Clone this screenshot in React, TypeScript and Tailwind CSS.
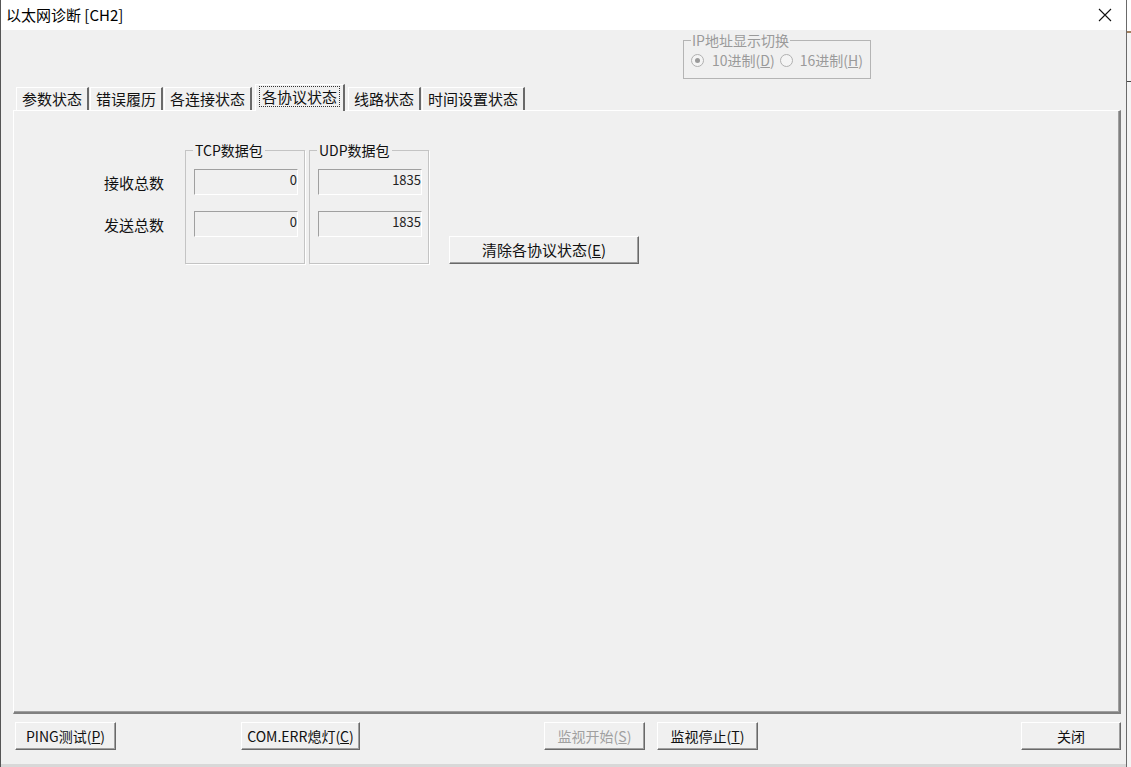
import React from 'react';

const font = { fontFamily: '"Noto Sans CJK SC", "Noto Sans", sans-serif' };

function Btn({ children, disabled, className }: { children: React.ReactNode; disabled?: boolean; className?: string }) {
  return (
    <div
      className={`flex items-center justify-center h-[28px] whitespace-nowrap border border-t-white border-l-white border-r-[#696969] border-b-[#696969] shadow-[inset_-1px_-1px_0_#a0a0a0] bg-[#f0f0f0] text-[14px] ${disabled ? 'text-[#a0a0a0]' : 'text-[#111]'} ${className ?? ''}`}
    >
      <span>{children}</span>
    </div>
  );
}

function Field({ value }: { value: string }) {
  return (
    <div className="h-[26px] border-t border-l border-t-[#a0a0a0] border-l-[#a0a0a0] border-b border-r border-b-white border-r-white bg-[#f0f0f0] text-[13px] text-right pr-0 leading-[20px] text-[#222]">
      {value}
    </div>
  );
}

function Group({ title, values }: { title: string; values: string[] }) {
  return (
    <div className="relative w-[120px] h-[114px] border border-[#c4c4c4] shadow-[1px_1px_0_white] pt-[18px] pl-[8px] pr-[6px]">
      <span className="absolute -top-[10px] left-[7px] bg-[#f0f0f0] px-[2px] text-[14px] leading-[18px] text-[#111]">{title}</span>
      <div className="flex flex-col gap-[16px]">
        {values.map((v, i) => (
          <Field key={i} value={v} />
        ))}
      </div>
    </div>
  );
}

const tabs = ['参数状态', '错误履历', '各连接状态', '各协议状态', '线路状态', '时间设置状态'];

export default function App() {
  return (
    <div className="w-[1131px] h-[767px] flex bg-white overflow-hidden" style={font}>
      <div className="w-[1127px] h-full flex flex-col border-l border-l-[#555] border-r border-r-[#6a6a6a]">
        {/* title bar */}
        <div className="h-[30px] bg-white flex items-center justify-between pl-[5px] pr-[14px]">
          <span className="text-[15px] text-black">以太网诊断 [CH2]</span>
          <svg width="14" height="14" viewBox="0 0 14 14">
            <path d="M1 1 L13 13 M13 1 L1 13" stroke="#111" strokeWidth="1.1" />
          </svg>
        </div>

        {/* body */}
        <div className="flex-1 bg-[#f0f0f0] flex flex-col border-b-[3px] border-b-[#d8d8d8]">
          <div className="h-[54px] pt-[10px] pl-[682px]">
            <div className="relative w-[188px] h-[39px] border border-[#b4b4b4] text-[#9a9a9a]">
              <span className="absolute -top-[9px] left-[7px] bg-[#f0f0f0] px-[1px] text-[14px] leading-[16px]">IP地址显示切换</span>
              <div className="flex items-center pl-[7px] pt-[10px] text-[14px] leading-[18px] whitespace-nowrap">
                <span className="w-[13px] h-[13px] rounded-full border border-[#b0b0b0] flex items-center justify-center bg-[#f4f4f4]">
                  <span className="w-[5px] h-[5px] rounded-full bg-[#9a9a9a]" />
                </span>
                <span className="ml-[8px]">
                  10进制(<u>D</u>)
                </span>
                <span className="ml-[5px] w-[13px] h-[13px] rounded-full border border-[#b0b0b0] bg-[#f4f4f4]" />
                <span className="ml-[7px]">
                  16进制(<u>H</u>)
                </span>
              </div>
            </div>
          </div>

          {/* tabs */}
          <div className="flex items-end gap-[1px] pl-[15px] h-[26px]">
            {tabs.map((t, i) =>
              i === 3 ? (
                <div key={t} className="relative -mb-[1px] z-10 h-[27px] px-[3px] mx-[2px] border-t border-l border-t-white border-l-white border-r-2 border-r-[#696969] bg-[#f0f0f0] flex items-start pt-[1px]">
                  <span className="border border-dotted border-[#333] px-[2px] text-[15px] leading-[19px] text-[#111]">{t}</span>
                </div>
              ) : (
                <div key={t} className="h-[23px] px-[5px] border-t border-l border-t-white border-l-white border-r-2 border-r-[#696969] flex items-center text-[15px] leading-[20px] text-[#111]">
                  {t}
                </div>
              )
            )}
          </div>

          {/* tab panel */}
          <div className="ml-[12px] mr-[5px] h-[604px] border-t border-l border-t-white border-l-white border-r-2 border-b-2 border-r-[#808080] border-b-[#808080] shadow-[inset_-1px_-1px_0_#a0a0a0]">
            <div className="flex pt-[39px]">
              <div className="w-[171px] flex flex-col items-end pr-[21px] pt-[22px] gap-[20px] text-[15px] leading-[22px] text-[#111]">
                <span>接收总数</span>
                <span>发送总数</span>
              </div>
              <div className="flex gap-[4px]">
                <Group title="TCP数据包" values={['0', '0']} />
                <Group title="UDP数据包" values={['1835', '1835']} />
              </div>
              <div className="pt-[86px] pl-[20px]">
                <Btn className="w-[190px] text-[15px]">
                  清除各协议状态(<u>E</u>)
                </Btn>
              </div>
            </div>
          </div>

          {/* bottom buttons */}
          <div className="flex items-start pt-[8px] pl-[14px]">
            <Btn className="w-[101px]">
              PING测试(<u>P</u>)
            </Btn>
            <Btn className="w-[119px] ml-[125px]">
              COM.ERR熄灯(<u>C</u>)
            </Btn>
            <Btn disabled className="w-[101px] ml-[184px]">
              监视开始(<u>S</u>)
            </Btn>
            <Btn className="w-[101px] ml-[12px]">
              监视停止(<u>T</u>)
            </Btn>
            <Btn className="w-[100px] ml-[263px]">关闭</Btn>
          </div>
        </div>
      </div>
      <div className="w-[4px] h-full bg-[#f4f4f4] flex flex-col">
        <div className="h-[31px] bg-white" />
        <div className="h-[2px] bg-[#a08060]" />
        <div className="h-[48px]" />
        <div className="h-[1px] bg-[#444]" />
      </div>
    </div>
  );
}
